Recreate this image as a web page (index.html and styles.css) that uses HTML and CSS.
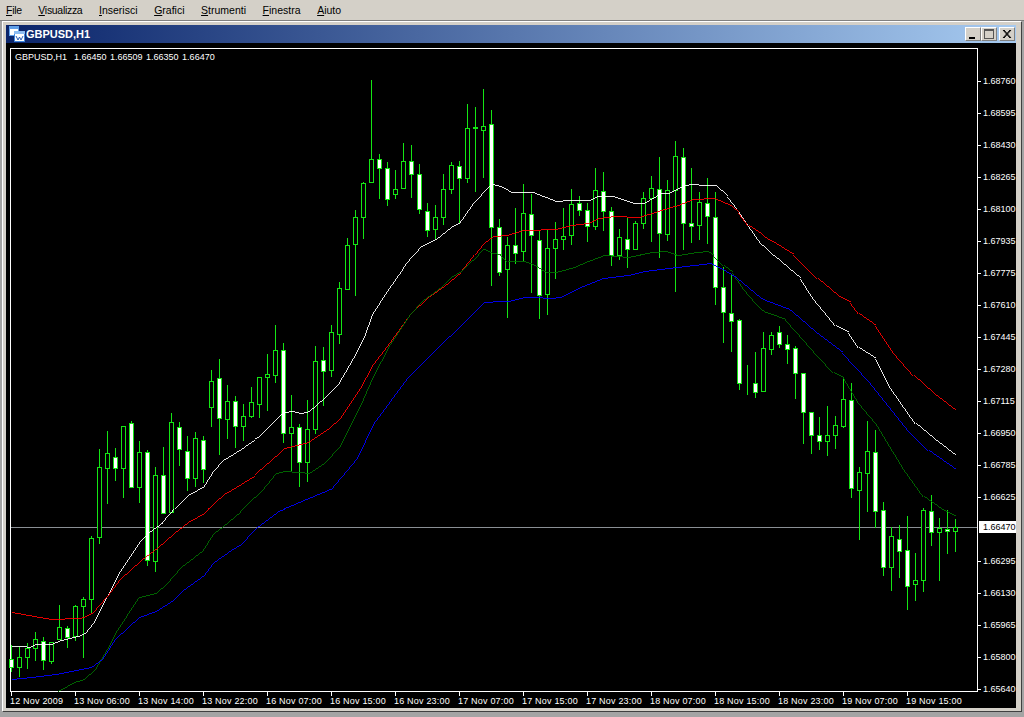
FILE: index.html
```html
<!doctype html>
<html lang="it">
<head>
    <meta charset="UTF-8">
    <title>GBPUSD,H1</title>
    <link rel="stylesheet" href="styles.css">
</head>
<body>
<nav class="menubar">
    <span class="menu-item tight"><u>F</u>ile</span>
    <span class="menu-item tight"><u>V</u>isualizza</span>
    <span class="menu-item"><u>I</u>nserisci</span>
    <span class="menu-item"><u>G</u>rafici</span>
    <span class="menu-item"><u>S</u>trumenti</span>
    <span class="menu-item"><u>F</u>inestra</span>
    <span class="menu-item"><u>A</u>iuto</span>
</nav>
<div class="workspace">
    <div class="window">
        <div class="titlebar">
            <svg class="title-icon" width="16" height="16" viewBox="0 0 16 16">
                <rect x="0.5" y="0.5" width="9" height="9" fill="#ffffff" stroke="#5f9fe8"/>
                <rect x="0" y="0" width="10" height="3" fill="#5f9fe8"/>
                <rect x="5.5" y="5.5" width="10" height="10" fill="#ffffff" stroke="#3f86dc"/>
                <rect x="5" y="5" width="11" height="3" fill="#8dbdf2"/>
                <polyline points="7,10 9,14 10.5,11 12,14 14,10" fill="none" stroke="#2a5fb8"/>
            </svg>
            <span class="title-text">GBPUSD,H1</span>
            <span class="title-buttons">
                <span class="title-btn"><svg width="12" height="10" viewBox="0 0 12 10"><rect x="2" y="8" width="6" height="2" fill="#000"/></svg></span>
                <span class="title-btn"><svg width="12" height="10" viewBox="0 0 12 10"><rect x="1.5" y="1" width="9" height="8.5" fill="none" stroke="#555"/><rect x="1" y="0" width="10" height="2" fill="#555"/></svg></span>
                <span class="title-btn close-btn"><svg width="12" height="10" viewBox="0 0 12 10"><path d="M2 1 L9 9 M3 1 L10 9 M9 1 L2 9 M10 1 L3 9" stroke="#000" fill="none"/></svg></span>
            </span>
        </div>
        <div class="client">
            <svg id="chart" class="chart" width="1010" height="665" viewBox="6 43 1010 665"></svg>
        </div>
    </div>
</div>
<script src="chart.js"></script>
</body>
</html>
```

FILE: styles.css
```css
html, body {
    margin: 0;
    padding: 0;
}
body {
    width: 1024px;
    height: 717px;
    overflow: hidden;
    background-color: #d4d0c8;
    font-family: "Liberation Sans", Arial, sans-serif;
}
.menubar {
    display: flex;
    gap: 16.6px;
    height: 20px;
    padding-left: 6px;
    font-size: 10.5px;
    line-height: 21px;
    color: #000000;
    box-sizing: border-box;
}
.tight {
    letter-spacing: -0.3px;
}
.workspace {
    height: 697px;
    box-sizing: border-box;
    padding: 0 2px 5px 2px;
    background-color: #a4a4a4;
    border-top: 1px solid #808080;
}
.window {
    height: 691px;
    box-sizing: border-box;
    padding: 3px 5px 3px 3px;
    background-color: #d4d0c8;
    border: 1px solid #404040;
    border-top-color: #ffffff;
    border-left-color: #ffffff;
}
.titlebar {
    display: flex;
    align-items: center;
    height: 18px;
    padding: 0 1px 0 3px;
    background: linear-gradient(to right, #0a246a, #a6caf0);
}
.title-icon {
    flex: none;
    margin-right: 1px;
}
.title-text {
    font-size: 11px;
    font-weight: bold;
    color: #ffffff;
}
.title-buttons {
    display: flex;
    margin-left: auto;
}
.title-btn {
    display: flex;
    align-items: center;
    justify-content: center;
    width: 16px;
    height: 14px;
    box-sizing: border-box;
    background-color: #d4d0c8;
    border: 1px solid #808080;
    border-top-color: #ffffff;
    border-left-color: #ffffff;
}
.close-btn {
    margin-left: 2px;
}
.client {
    background-color: #000000;
}
.chart {
    display: block;
}
.axis-line {
    stroke: #ffffff;
    shape-rendering: crispEdges;
}
.price-line {
    stroke: #8a8f94;
    shape-rendering: crispEdges;
}
.wick {
    fill: #14e614;
    shape-rendering: crispEdges;
}
.body-up {
    fill: #000000;
    stroke: #14e614;
    shape-rendering: crispEdges;
}
.body-down {
    fill: #ffffff;
    stroke: #14e614;
    shape-rendering: crispEdges;
}
.ma {
    fill: none;
    stroke-width: 0.9;
    shape-rendering: crispEdges;
}
.ma-white { stroke: #ffffff; }
.ma-red { stroke: #ff0000; }
.ma-green { stroke: #006e00; }
.ma-blue { stroke: #0000ff; }
.label {
    font-family: "Liberation Sans", Arial, sans-serif;
    font-size: 9px;
    fill: #ffffff;
}
.time-label {
    letter-spacing: 0.2px;
}
.legend {
    white-space: pre;
    word-spacing: 1px;
}
.price-box {
    fill: #ffffff;
}
.price-box-text {
    fill: #000000;
}
```

FILE: chart.js
```js
// hi, body top, body bottom, lo (pixel rows), 1 = white body
const candles = [
[645,659,667,671,1],[647,657,667,676,0],[643,648,657,668,0],[632,639,648,660,0],[637,641,660,669,1],
[642,642,661,663,0],[605,627,639,639,0],[626,628,637,647,1],[605,606,636,640,0],[597,599,606,657,0],
[536,538,599,612,0],[449,467,537,543,0],[431,453,468,503,0],[448,457,468,480,1],[426,426,468,497,0],
[421,423,487,487,1],[441,452,487,502,0],[450,452,560,565,1],[467,475,561,571,0],[447,475,513,513,1],
[413,422,512,512,0],[422,427,449,465,1],[436,451,478,490,1],[432,438,478,486,0],[436,440,469,482,1],
[370,381,407,426,0],[359,378,418,454,1],[385,401,419,438,0],[396,401,426,447,1],[404,416,426,440,0],
[387,402,416,417,0],[377,377,404,417,0],[354,374,377,410,0],[325,350,375,382,0],[343,350,433,442,1],
[395,427,433,470,0],[424,427,462,486,1],[400,429,462,481,0],[346,361,429,433,0],[347,360,371,405,1],
[325,332,370,376,0],[282,288,334,343,0],[238,245,289,289,0],[210,217,244,295,0],[182,183,217,238,0],
[80,159,182,182,0],[154,159,168,198,1],[162,168,199,205,1],[170,189,194,198,0],[143,161,188,188,0],
[145,161,174,197,1],[164,174,209,213,1],[203,211,230,236,1],[205,217,229,238,0],[174,189,217,224,0],
[162,165,189,193,0],[161,166,178,222,1],[104,128,178,182,0],[107,127,128,191,1],[89,126,130,177,0],
[110,124,227,285,1],[219,227,272,275,1],[237,245,269,317,0],[208,245,253,263,1],[184,213,251,260,0],
[194,214,235,292,1],[231,240,295,318,1],[230,248,294,314,0],[222,239,248,278,0],[208,236,239,249,0],
[189,204,235,244,0],[196,203,210,215,1],[203,210,226,241,1],[168,190,226,229,0],[172,191,211,230,1],
[207,211,255,265,1],[229,237,255,259,0],[218,239,249,267,1],[221,223,249,249,0],[192,198,223,228,0],
[176,188,198,241,0],[157,189,233,257,1],[180,190,234,240,0],[141,156,190,291,0],[148,157,223,249,1],
[168,223,226,242,1],[192,202,225,239,0],[178,203,216,243,1],[192,217,287,304,1],[267,287,312,342,1],
[274,313,321,351,1],[319,320,383,389,1],[365,383,383,394,1],[352,383,392,397,1],[332,348,391,391,0],
[332,335,349,354,0],[326,332,344,347,1],[335,344,349,363,1],[346,348,373,398,1],[373,373,412,443,1],
[412,412,435,453,1],[417,435,441,449,1],[406,435,441,455,0],[416,425,435,448,0],[377,399,426,427,0],
[383,400,488,497,1],[467,472,490,539,0],[421,451,473,511,0],[430,452,511,527,1],[502,510,567,575,1],
[527,536,567,590,0],[525,539,551,577,1],[516,550,586,609,1],[553,580,584,600,0],[508,510,580,591,0],
[495,511,532,545,1],[518,528,532,580,0],[510,529,531,553,1],[519,527,531,551,0]
];

const whiteLine = "11,646 23,646 28,647 35,644 50,644 60,640 77,636 85,632 93,622 107,595 120,570 132,552 140,540 148,532 162,522 175,507 187,495 203,486 213,470 222,460 240,449 257,437 277,417 282,412 292,411 300,413 308,411 323,398 338,383 353,357 365,333 372,313 387,290 403,267 420,246 435,239 450,227 459,222 473,202 488,186 492,184 500,186 512,192 532,192 555,201 567,200 588,200 597,196 612,196 633,203 643,203 660,193 668,193 683,185 692,184 702,185 715,185 727,196 733,203 740,213 748,225 760,242 773,255 787,267 800,278 813,298 823,310 835,325 848,332 858,347 875,358 890,387 915,423 933,438 955,455";
const redLine = "11,612 33,616 50,619 77,618 83,617 92,612 107,595 120,578 140,560 157,547 173,533 187,522 203,513 225,493 253,476 267,463 283,448 307,442 328,428 340,417 360,387 373,363 387,345 410,313 427,297 443,286 460,272 483,243 492,236 507,235 523,230 555,229 570,225 587,223 597,218 613,216 638,217 660,210 677,205 692,199 713,198 730,205 738,212 748,225 770,240 793,254 817,278 837,295 850,302 858,313 875,325 893,352 913,375 933,393 955,410";
const greenLine = "57,691 73,682 83,679 95,668 107,648 115,632 138,597 155,593 167,582 180,567 202,550 213,533 222,526 240,511 262,489 275,473 283,471 298,472 308,473 323,463 340,445 363,398 373,375 390,343 410,313 422,300 440,287 450,277 460,271 483,249 492,253 500,254 507,261 523,261 532,264 545,272 555,272 573,267 587,261 603,255 627,257 652,252 665,251 677,255 695,252 707,251 713,255 723,265 732,272 743,288 755,302 765,312 785,319 795,330 817,355 833,372 843,377 858,402 875,422 880,430 903,468 923,496 940,508 955,516";
const blueLine = "11,679 30,677 55,674 75,670 90,667 102,658 115,638 138,617 155,611 172,600 182,590 203,575 213,562 230,550 240,544 253,530 280,510 330,489 357,457 373,423 407,377 437,347 460,325 483,302 500,301 508,301 523,297 535,297 548,298 560,297 577,288 602,278 627,275 643,271 667,268 693,265 710,263 720,268 735,277 760,298 787,308 798,317 815,332 842,352 868,380 908,430 928,450 955,469";

const prices = [
["1.68760",81],["1.68595",113],["1.68430",145],["1.68265",177],["1.68100",209],["1.67935",241],
["1.67775",273],["1.67610",305],["1.67445",337],["1.67280",369],["1.67115",401],["1.66950",433],
["1.66785",465],["1.66625",497],["1.66295",561],["1.66130",593],["1.65965",625],["1.65800",657],["1.65640",689]
];
const times = ["12 Nov 2009","13 Nov 06:00","13 Nov 14:00","13 Nov 22:00","16 Nov 07:00","16 Nov 15:00","16 Nov 23:00","17 Nov 07:00","17 Nov 15:00","17 Nov 23:00","18 Nov 07:00","18 Nov 15:00","18 Nov 23:00","19 Nov 07:00","19 Nov 15:00"];

const chart = document.getElementById("chart");

function add(tag, cls, attrs, text) {
    const el = document.createElementNS("http://www.w3.org/2000/svg", tag);
    el.setAttribute("class", cls);
    for (const k in attrs) el.setAttribute(k, attrs[k]);
    if (text) el.textContent = text;
    chart.appendChild(el);
    return el;
}

function line(x1, y1, x2, y2, cls) {
    add("line", cls, {x1: x1, y1: y1, x2: x2, y2: y2});
}

// frame
line(10, 48.5, 977, 48.5, "axis-line");
line(10.5, 48, 10.5, 692, "axis-line");
line(977.5, 48, 977.5, 692, "axis-line");
line(10, 691.5, 977, 691.5, "axis-line");

// current price line goes under the candles
line(11, 527.5, 977, 527.5, "price-line");

candles.forEach(function(c, i) {
    const x = 11 + 8 * i;
    add("rect", "wick", {x: x, y: c[0], width: 1, height: c[3] - c[0] + 1});
    add("rect", c[4] ? "body-down" : "body-up", {x: x - 1.5, y: c[1] + 0.5, width: 4, height: c[2] - c[1]});
});

[["ma-white", whiteLine], ["ma-red", redLine], ["ma-green", greenLine], ["ma-blue", blueLine]].forEach(function(m) {
    add("polyline", "ma " + m[0], {points: m[1], transform: "translate(0.5 0.5)"});
});

prices.forEach(function(p) {
    line(977, p[1] + 0.5, 981, p[1] + 0.5, "axis-line");
    add("text", "label", {x: 983, y: p[1] + 3}, p[0]);
});

add("rect", "price-box", {x: 979, y: 521, width: 37, height: 12});
add("text", "label price-box-text", {x: 983, y: 530}, "1.66470");

times.forEach(function(t, i) {
    const x = 11 + 64 * i;
    line(x + 0.5, 691, x + 0.5, 696, "axis-line");
    add("text", "label time-label", {x: x - 1, y: 704}, t);
});

add("text", "label legend", {x: 15, y: 60}, "GBPUSD,H1  1.66450 1.66509 1.66350 1.66470");
```
